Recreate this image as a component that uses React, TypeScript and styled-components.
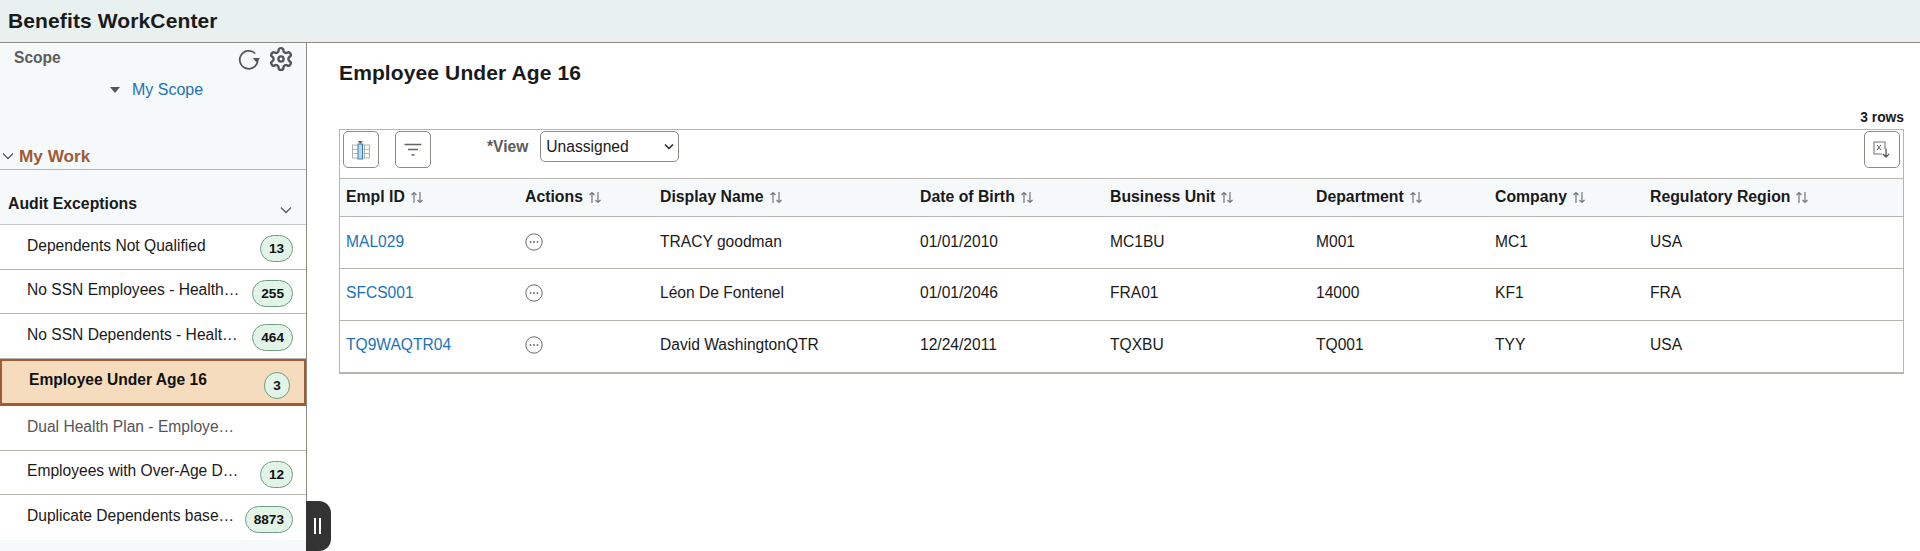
import React from "react";
import styled, { createGlobalStyle } from "styled-components";

const Global = createGlobalStyle`
  html, body { margin: 0; padding: 0; background: #fff; }
  body { font-family: "Liberation Sans", Arial, sans-serif; color: #1a1a1a; }
  * { box-sizing: border-box; }
`;

const Page = styled.div`
  position: relative;
  width: 1920px;
  height: 551px;
  overflow: hidden;
  display: flex;
  flex-direction: column;
`;
const TopBar = styled.header`
  height: 43px;
  flex: none;
  display: flex;
  align-items: center;
  padding: 0 8px 1px;
  background: #e8f0f0;
  border-bottom: 1px solid #8f8a84;
`;
const AppTitle = styled.h1`
  margin: 0;
  font-size: 21px;
  font-weight: 700;
  color: #1a1a1a;
  letter-spacing: 0.12px;
`;
const Body = styled.div`
  flex: 1;
  display: flex;
  min-height: 0;
`;
const Sidebar = styled.aside`
  width: 307px;
  flex: none;
  background: #f5f9fa;
  border-right: 1px solid #8f8a84;
  display: flex;
  flex-direction: column;
`;
const ScopeHead = styled.div`
  height: 29px;
  display: flex;
  align-items: center;
  justify-content: space-between;
  padding: 0 12px 0 14px;
`;
const ScopeLabel = styled.span`
  font-size: 15.6px;
  font-weight: 700;
  color: #5c5c5c;
`;
const ScopeIcons = styled.div`
  display: flex;
  align-items: center;
  gap: 7px;
  margin-top: 2px;
`;
const ScopeLink = styled.div`
  height: 35px;
  display: flex;
  align-items: center;
  padding-left: 110px;
  gap: 12px;
  font-size: 16px;
  color: #1c72b8;
`;
const Caret = styled.span`
  width: 0;
  height: 0;
  border-left: 5px solid transparent;
  border-right: 5px solid transparent;
  border-top: 6px solid #555;
`;
const MyWork = styled.div`
  margin-top: 31px;
  height: 32px;
  padding: 5px 0 0 1px;
  display: flex;
  align-items: center;
  gap: 4px;
  font-size: 17.2px;
  font-weight: 700;
  color: #a05a36;
  border-bottom: 1px solid #b8b4ae;
`;
const GroupHead = styled.div`
  height: 55px;
  display: flex;
  justify-content: space-between;
  padding: 25px 13px 0 8px;
  font-size: 15.8px;
  line-height: 18px;
  font-weight: 700;
  color: #1a1a1a;
  border-bottom: 1px solid #c5c7c6;
`;
const GroupChevron = styled.span`
  margin-top: 8px;
  height: 14px;
`;
const NavItem = styled.div<{ $active?: boolean; $h: number }>`
  height: ${(p) => p.$h}px;
  display: flex;
  align-items: center;
  justify-content: space-between;
  background: ${(p) => (p.$active ? "#f5dcbc" : "#fff")};
  border: ${(p) => (p.$active ? "2px solid #a05a36" : "none")};
  border-bottom: ${(p) => (p.$active ? "3px solid #a05a36" : "1px solid #b8b4ae")};
  padding: ${(p) => (p.$active ? "0 13px 0 27px" : "0 13px 3px 27px")};
  &:last-child { border-bottom: none; }
`;
const NavText = styled.span<{ $active?: boolean; $muted?: boolean }>`
  font-size: 15.6px;
  font-weight: ${(p) => (p.$active ? 700 : 400)};
  color: ${(p) => (p.$muted ? "#555" : p.$active ? "#111" : "#1a1a1a")};
  white-space: nowrap;
  overflow: hidden;
  text-overflow: ellipsis;
  max-width: ${(p) => (p.$active ? "235px" : "214px")};
  margin-top: ${(p) => (p.$active ? "-4px" : "0")};
`;
const Badge = styled.span<{ $active?: boolean }>`
  flex: none;
  height: 27px;
  min-width: ${(p) => (p.$active ? 26 : 33)}px;
  padding: 0 8px;
  margin-top: 6px;
  display: inline-flex;
  align-items: center;
  justify-content: center;
  border-radius: 14px;
  background: #e2f3e8;
  border: 1px solid #6e9f82;
  font-size: 13.6px;
  font-weight: 700;
  color: #111;
  margin-right: ${(p) => (p.$active ? "1px" : "0")};
`;
const Handle = styled.div`
  position: absolute;
  left: 306px;
  top: 501px;
  width: 25px;
  height: 50px;
  background: #333;
  border-radius: 0 12px 12px 0;
  display: flex;
  align-items: center;
  justify-content: center;
  gap: 3px;
  padding-right: 3px;
`;
const HandleBar = styled.span`
  width: 2px;
  height: 16px;
  background: #fff;
`;
const Main = styled.main`
  flex: 1;
  min-width: 0;
  padding: 18px 16px 0 32px;
`;
const PageTitle = styled.h2`
  margin: 0;
  height: 24px;
  line-height: 24px;
  font-size: 21px;
  font-weight: 700;
  letter-spacing: 0.12px;
  color: #1a1a1a;
`;
const RowCount = styled.div`
  margin-top: 23px;
  height: 21px;
  line-height: 20px;
  text-align: right;
  font-size: 13.8px;
  font-weight: 700;
  color: #1a1a1a;
`;
const Grid = styled.div`
  border: 1px solid #b8b4ae;
  border-bottom-width: 2px;
`;
const Toolbar = styled.div`
  height: 48px;
  display: flex;
  align-items: flex-start;
  padding: 1px 3px 0 3px;
`;
const IconButton = styled.button<{ $gap?: number }>`
  width: 36px;
  height: 37px;
  padding: 0;
  display: flex;
  align-items: center;
  justify-content: center;
  background: #fff;
  border: 1px solid #8f8a84;
  border-radius: 5px;
  margin-right: ${(p) => p.$gap ?? 0}px;
`;
const ViewLabel = styled.label`
  margin: 7px 12px 0 56px;
  font-size: 15.6px;
  font-weight: 700;
  color: #5c5c5c;
`;
const SelectBox = styled.div`
  position: relative;
  width: 139px;
  height: 31px;
`;
const Select = styled.select`
  appearance: none;
  width: 100%;
  height: 100%;
  font: 15.6px "Liberation Sans", Arial, sans-serif;
  color: #1a1a1a;
  background: #fff;
  border: 1px solid #8f8a84;
  border-radius: 5px;
  padding: 0 5px;
`;
const SelectArrow = styled.svg`
  position: absolute;
  right: 5px;
  top: 12px;
  pointer-events: none;
`;
const Spacer = styled.div`
  flex: 1;
`;
const Columns = "178px 135px 260px 190px 206px 179px 155px 1fr";
const HeaderRow = styled.div`
  display: grid;
  grid-template-columns: ${Columns};
  height: 39px;
  background: #f5f9fa;
  border-top: 1px solid #b8b4ae;
  border-bottom: 1px solid #b8b4ae;
`;
const HeaderCell = styled.div<{ $first?: boolean }>`
  display: flex;
  align-items: center;
  gap: 5px;
  padding-left: ${(p) => (p.$first ? 6 : 7)}px;
  padding-bottom: 1px;
  font-size: 15.8px;
  font-weight: 700;
  color: #1a1a1a;
`;
const DataRow = styled.div<{ $first?: boolean }>`
  display: grid;
  grid-template-columns: ${Columns};
  height: 52px;
  padding-top: ${(p) => (p.$first ? 1 : 0)}px;
  border-bottom: 1px solid #b8b4ae;
  &:last-child { border-bottom: none; height: 51px; }
`;
const Cell = styled.div`
  padding: 15px 0 0 7px;
  font-size: 15.6px;
  line-height: 18px;
  color: #1a1a1a;
`;
const LinkCell = styled(Cell)`
  padding-left: 6px;
  color: #1c72b8;
`;
const ActionCell = styled(Cell)`
  padding: 15px 0 0 7px;
`;

const Refresh = () => (
  <svg width="23" height="23" viewBox="0 0 20 20" fill="none" stroke="#555" strokeWidth="1.5">
    <path d="M16.4 8.5A7.8 7.8 0 1 0 16.3 13.2" transform="rotate(-28 10 10)" />
    <path d="M12.8 9.5h6.4l-3.2 3.8z" fill="#555" stroke="none" />
  </svg>
);
const Gear = () => (
  <svg width="26" height="26" viewBox="0 0 24 24" fill="none" stroke="#555" strokeWidth="2.2" strokeLinecap="round" strokeLinejoin="round">
    <path d="M12.22 2h-.44a2 2 0 0 0-2 2v.18a2 2 0 0 1-1 1.73l-.43.25a2 2 0 0 1-2 0l-.15-.08a2 2 0 0 0-2.73.73l-.22.38a2 2 0 0 0 .73 2.73l.15.1a2 2 0 0 1 1 1.72v.51a2 2 0 0 1-1 1.74l-.15.09a2 2 0 0 0-.73 2.73l.22.38a2 2 0 0 0 2.73.73l.15-.08a2 2 0 0 1 2 0l.43.25a2 2 0 0 1 1 1.73V20a2 2 0 0 0 2 2h.44a2 2 0 0 0 2-2v-.18a2 2 0 0 1 1-1.73l.43-.25a2 2 0 0 1 2 0l.15.08a2 2 0 0 0 2.73-.73l.22-.39a2 2 0 0 0-.73-2.73l-.15-.08a2 2 0 0 1-1-1.74v-.5a2 2 0 0 1 1-1.74l.15-.09a2 2 0 0 0 .73-2.73l-.22-.38a2 2 0 0 0-2.73-.73l-.15.08a2 2 0 0 1-2 0l-.43-.25a2 2 0 0 1-1-1.73V4a2 2 0 0 0-2-2z" />
    <circle cx="12" cy="12" r="2.4" />
  </svg>
);
const Chevron = ({ size = 14 }: { size?: number }) => (
  <svg width={size} height={size} viewBox="0 0 14 14" fill="none" stroke="#5a5a5a" strokeWidth="1.3">
    <path d="M2 4.5 7 9.5 12 4.5" />
  </svg>
);
const Sort = () => (
  <svg width="14" height="13" viewBox="0 0 14 13" fill="none" stroke="#777" strokeWidth="1.2">
    <path d="M4 12V1.5M1.5 4 4 1.5 6.5 4" />
    <path d="M10 1v10.5M7.5 9 10 11.5 12.5 9" />
  </svg>
);
const Dots = () => (
  <svg width="18" height="18" viewBox="0 0 18 18" fill="none">
    <circle cx="9" cy="9" r="8.2" stroke="#6a6a6a" strokeWidth="1" />
    <circle cx="5.5" cy="9" r="0.9" fill="#6a6a6a" />
    <circle cx="9" cy="9" r="0.9" fill="#6a6a6a" />
    <circle cx="12.5" cy="9" r="0.9" fill="#6a6a6a" />
  </svg>
);
const ColumnsIcon = () => (
  <svg width="18" height="20" viewBox="0 0 18 20" fill="none" stroke="#a0a0a0" strokeWidth="0.8">
    <rect x="0.5" y="5" width="17" height="13" />
    <path d="M0.5 9.3h17M0.5 13.6h17M12.5 5v13" />
    <rect x="6" y="4" width="4.5" height="15" fill="#b5d8ec" stroke="#3f7fa8" strokeWidth="1" />
    <path d="M5.5 1h5.5l-2.7 3z" fill="#666" stroke="none" />
  </svg>
);
const FilterIcon = () => (
  <svg width="18" height="14" viewBox="0 0 18 14" fill="none" stroke="#666" strokeWidth="1.5">
    <path d="M0.5 1.5h17M4 6.5h10M7.5 12h3" />
  </svg>
);
const ExportIcon = () => (
  <svg width="18" height="18" viewBox="0 0 18 18" fill="none">
    <path d="M9 13H1V1h11v7" stroke="#777" strokeWidth="1.1" />
    <path d="M4 4l4 5M8 4l-4 5" stroke="#555" strokeWidth="1" />
    <path d="M13 7.5v8.5M10 13l3 3 3-3" stroke="#555" strokeWidth="1.3" />
  </svg>
);

const items = [
  { text: "Dependents Not Qualified", n: "13", h: 45 },
  { text: "No SSN Employees - Health Plans", n: "255", h: 44 },
  { text: "No SSN Dependents - Health Plans", n: "464", h: 45 },
  { text: "Employee Under Age 16", n: "3", h: 47, active: true },
  { text: "Dual Health Plan - Employees Only", h: 45, muted: true },
  { text: "Employees with Over-Age Dependents", n: "12", h: 44 },
  { text: "Duplicate Dependents based on SSN", n: "8873", h: 45 },
];
const headers = ["Empl ID", "Actions", "Display Name", "Date of Birth", "Business Unit", "Department", "Company", "Regulatory Region"];
const rows = [
  ["MAL029", "TRACY goodman", "01/01/2010", "MC1BU", "M001", "MC1", "USA"],
  ["SFCS001", "Léon De Fontenel", "01/01/2046", "FRA01", "14000", "KF1", "FRA"],
  ["TQ9WAQTR04", "David WashingtonQTR", "12/24/2011", "TQXBU", "TQ001", "TYY", "USA"],
];

export default function App() {
  return (
    <Page>
      <Global />
      <TopBar>
        <AppTitle>Benefits WorkCenter</AppTitle>
      </TopBar>
      <Body>
        <Sidebar>
          <ScopeHead>
            <ScopeLabel>Scope</ScopeLabel>
            <ScopeIcons>
              <Refresh />
              <Gear />
            </ScopeIcons>
          </ScopeHead>
          <ScopeLink>
            <Caret />
            My Scope
          </ScopeLink>
          <MyWork>
            <Chevron />
            My Work
          </MyWork>
          <GroupHead>
            Audit Exceptions
            <GroupChevron><Chevron /></GroupChevron>
          </GroupHead>
          {items.map((it) => (
            <NavItem key={it.text} $active={it.active} $h={it.h}>
              <NavText $active={it.active} $muted={it.muted}>{it.text}</NavText>
              {it.n && <Badge $active={it.active}>{it.n}</Badge>}
            </NavItem>
          ))}
        </Sidebar>
        <Main>
          <PageTitle>Employee Under Age 16</PageTitle>
          <RowCount>3 rows</RowCount>
          <Grid>
            <Toolbar>
              <IconButton $gap={16}><ColumnsIcon /></IconButton>
              <IconButton><FilterIcon /></IconButton>
              <ViewLabel>*View</ViewLabel>
              <SelectBox>
                <Select defaultValue="Unassigned">
                  <option>Unassigned</option>
                </Select>
                <SelectArrow width="10" height="8" viewBox="0 0 10 8" fill="none" stroke="#222" strokeWidth="1.5">
                  <path d="M1 1.5 5 5.5 9 1.5" />
                </SelectArrow>
              </SelectBox>
              <Spacer />
              <IconButton><ExportIcon /></IconButton>
            </Toolbar>
            <HeaderRow>
              {headers.map((h, i) => (
                <HeaderCell key={h} $first={i === 0}>{h}<Sort /></HeaderCell>
              ))}
            </HeaderRow>
            {rows.map((r, ri) => (
              <DataRow key={r[0]} $first={ri === 0}>
                <LinkCell>{r[0]}</LinkCell>
                <ActionCell><Dots /></ActionCell>
                {r.slice(1).map((c, i) => (
                  <Cell key={i}>{c}</Cell>
                ))}
              </DataRow>
            ))}
          </Grid>
        </Main>
      </Body>
      <Handle>
        <HandleBar />
        <HandleBar />
      </Handle>
    </Page>
  );
}
